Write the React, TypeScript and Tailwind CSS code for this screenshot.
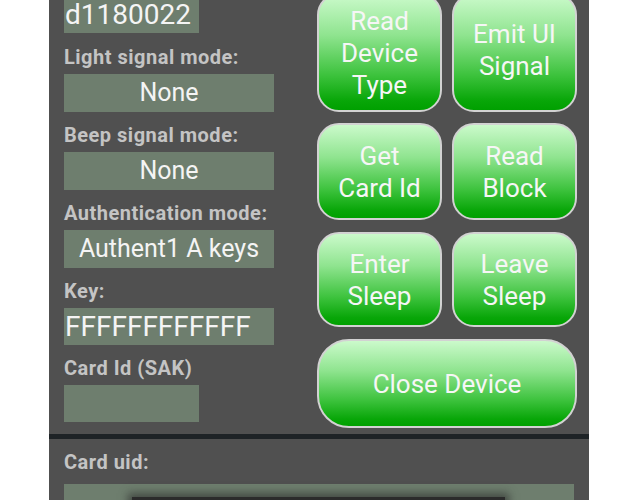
import React from "react";

const btn =
  "shrink-0 flex items-center justify-center text-center rounded-[22px] border-2 border-[#d2d2d2] text-[#f6f6f6] text-[26px] leading-[32px] bg-[linear-gradient(to_bottom,#cbfacb_0%,#8fe48f_35%,#3cc23c_70%,#08a608_92%,#00a000_100%)]";

const labelCls =
  "shrink-0 text-[20px] leading-[20px] font-bold tracking-[0.5px] text-[#c4c4c4] whitespace-nowrap";

function Label({ children }: { children: React.ReactNode }) {
  return <div className={labelCls + " h-[40px] pt-[13px]"}>{children}</div>;
}

function Field({ children, className = "" }: { children?: React.ReactNode; className?: string }) {
  return (
    <div className={"shrink-0 bg-[#6e7e6e] text-[#f4f4f4] flex items-center " + className}>{children}</div>
  );
}

export default function App() {
  return (
    <div
      className="w-[638px] h-[500px] overflow-hidden bg-white"
      style={{ fontFamily: "Roboto, 'Noto Sans', sans-serif" }}
    >
      <div className="ml-[49px] w-[540px] h-[500px] bg-[#505050] flex flex-col">
        <div className="shrink-0 -mt-[7px] flex flex-row items-start pl-[15px]">
          <div className="w-[210px] pt-[3px] flex flex-col">
            <Field className="w-[135px] h-[37px] text-[28px] pl-[1px]">d1180022</Field>
            <div className={labelCls + " h-[41px] pt-[14px]"}>Light signal mode:</div>
            <Field className="h-[38px] justify-center text-[25px]">None</Field>
            <Label>Beep signal mode:</Label>
            <Field className="h-[38px] justify-center text-[25px]">None</Field>
            <Label>Authentication mode:</Label>
            <Field className="h-[38px] justify-center text-[25px]">Authent1 A keys</Field>
            <Label>Key:</Label>
            <Field className="h-[37px] text-[28px] pl-[1px]">FFFFFFFFFFFF</Field>
            <Label>Card Id (SAK)</Label>
            <Field className="w-[135px] h-[37px]" />
          </div>
          <div className="ml-[43px] w-[260px] flex flex-col gap-[12px]">
            <div className="flex flex-row gap-[10px] -mb-[1px]">
              <div className={btn + " w-[125px] h-[119px]"}>
                Read
                <br />
                Device
                <br />
                Type
              </div>
              <div className={btn + " w-[125px] h-[119px] pb-[6px]"}>
                Emit UI
                <br />
                Signal
              </div>
            </div>
            <div className="flex flex-row gap-[10px]">
              <div className={btn + " w-[125px] h-[97px]"}>
                Get
                <br />
                Card Id
              </div>
              <div className={btn + " w-[125px] h-[97px]"}>
                Read
                <br />
                Block
              </div>
            </div>
            <div className="flex flex-row gap-[10px]">
              <div className={btn + " w-[125px] h-[95px]"}>
                Enter
                <br />
                Sleep
              </div>
              <div className={btn + " w-[125px] h-[95px]"}>
                Leave
                <br />
                Sleep
              </div>
            </div>
            <div className={btn + " w-[260px] h-[89px] rounded-[32px]"}>Close Device</div>
          </div>
        </div>
        <div className="shrink-0 mt-[6px] h-[5px] bg-[#1e2326]" />
        <div className="shrink-0 pl-[15px] pr-[15px]">
          <div className={labelCls + " h-[45px] pt-[13px]"}>Card uid:</div>
          <div className="h-[40px] bg-[#6e7e6e] pl-[68px] pt-[13px]">
            <div className="w-[373px] h-[20px] bg-[#2b2b2b] shadow-[0_0_8px_4px_rgba(40,40,40,0.6)]" />
          </div>
        </div>
      </div>
    </div>
  );
}
